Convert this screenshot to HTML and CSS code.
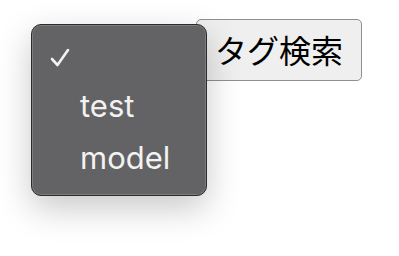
FILE: index.html
```html
<!DOCTYPE html>
<html>
<head>
    <title>タグ検索</title>
    <link rel="stylesheet" href="styles.css">
</head>
<body>
    <div class="search">
        <div class="select-slot"></div>
        <button class="btn">タグ検索</button>

        <ul class="menu">
            <li class="item checked">
                <svg class="check" width="22" height="22" viewBox="0 0 22 22"><polyline points="3,12 8.5,18 19,3" fill="none" stroke="#f2f2f2" stroke-width="2.6" stroke-linecap="round" stroke-linejoin="round"/></svg>
            </li>
            <li class="item">test</li>
            <li class="item">model</li>
        </ul>
    </div>
</body>
</html>
```

FILE: styles.css
```css
html, body { height: 100%; }
body { margin: 0; padding: 19px 0 0 0; box-sizing: border-box; background: #fff; font-family: Inter, "Liberation Sans", sans-serif; }
.search { position: relative; display: flex; align-items: flex-start; min-height: 230px; }
.select-slot { width: 196px; height: 62px; }
.btn { box-sizing: border-box; width: 166px; height: 62px; margin: 0; padding: 0 0 2px 0; background: #efefef; color: #000; border: 1.5px solid #8f8f8f; border-radius: 5px; font-family: "Noto Sans CJK JP", sans-serif; font-size: 32px; }
.menu { position: absolute; left: 31px; top: 5px; box-sizing: border-box; width: 176px; height: 172px; margin: 0; padding: 3px 0 0 0; list-style: none; background: #636365; border: 1px solid #2b2b2b; border-radius: 10px; box-shadow: inset 0 0 0 1px #7d7d7f, 0 12px 34px rgba(0,0,0,0.22); }
.item { height: 52px; line-height: 52px; padding-left: 48px; color: #f2f2f2; font-size: 31px; position: relative; }
.check { position: absolute; left: 17px; top: 19px; }
```
